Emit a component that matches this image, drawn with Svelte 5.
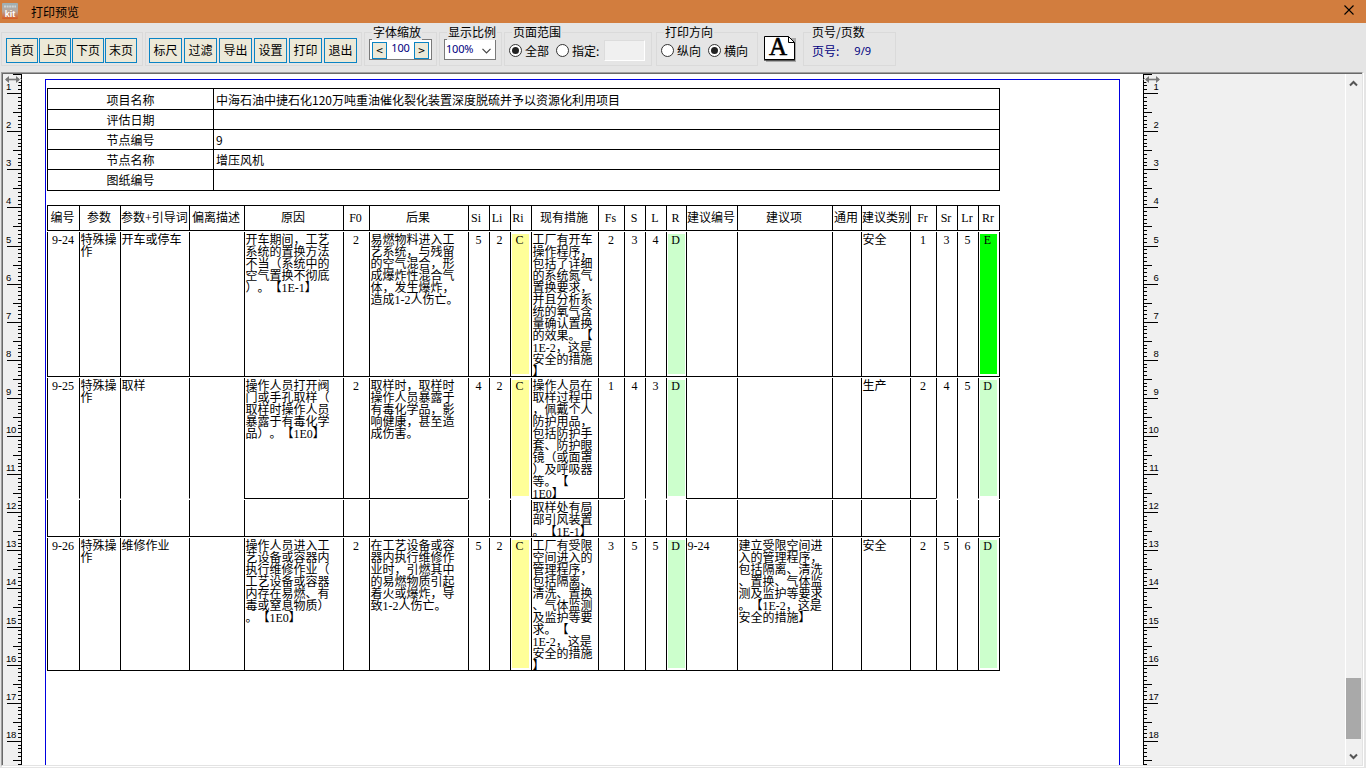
<script>
  const nav = ["首页", "上页", "下页", "末页"];
  const actions = ["标尺", "过滤", "导出", "设置", "打印", "退出"];

  const info = [
    ["项目名称", "中海石油中捷石化120万吨重油催化裂化装置深度脱硫并予以资源化利用项目"],
    ["评估日期", ""],
    ["节点编号", "9"],
    ["节点名称", "增压风机"],
    ["图纸编号", ""],
  ];

  const columns = [
    { title: "编号", center: true },
    { title: "参数" },
    { title: "参数+引导词" },
    { title: "偏离描述" },
    { title: "原因" },
    { title: "F0", center: true },
    { title: "后果" },
    { title: "Si", center: true, near: true },
    { title: "Li", center: true, near: true },
    { title: "Ri", center: true, near: true },
    { title: "现有措施" },
    { title: "Fs", center: true },
    { title: "S", center: true },
    { title: "L", center: true },
    { title: "R", center: true },
    { title: "建议编号" },
    { title: "建议项" },
    { title: "通用" },
    { title: "建议类别" },
    { title: "Fr", center: true },
    { title: "Sr", center: true },
    { title: "Lr", center: true },
    { title: "Rr", center: true },
  ];

  const risk = { C: "#ffff99", D: "#ccffcc", E: "#00ff00" };
  const riskColumns = [9, 14, 22];
  // columns that stay open when a record continues on the next line
  const merged = [0, 1, 2, 3, 7, 8, 9, 12, 13, 14, 20, 21, 22];

  const rows = [
    {
      height: 145,
      cells: [
        "9-24", "特殊操\n作", "开车或停车", "",
        "开车期间，工艺\n系统的置换方法\n不当（系统中的\n空气置换不彻底\n）。【1E-1】",
        "2",
        "易燃物料进入工\n艺系统，与残留\n的空气混合，形\n成爆炸性混合气\n体，发生爆炸，\n造成1-2人伤亡。",
        "5", "2", "C",
        "工厂有开车\n操作程序，\n包括了详细\n的系统氮气\n置换要求，\n并且分析系\n统的氧气含\n量确认置换\n的效果。【\n1E-2，这是\n安全的措施\n】",
        "2", "3", "4", "D", "", "", "", "安全", "1", "3", "5", "E",
      ],
    },
    {
      height: 121,
      open: true,
      cells: [
        "9-25", "特殊操\n作", "取样", "",
        "操作人员打开阀\n门或手孔取样（\n取样时操作人员\n暴露于有毒化学\n品）。【1E0】",
        "2",
        "取样时，取样时\n操作人员暴露于\n有毒化学品，影\n响健康，甚至造\n成伤害。",
        "4", "2", "C",
        "操作人员在\n取样过程中\n，佩戴个人\n防护用品，\n包括防护手\n套、防护眼\n镜（或面罩\n）及呼吸器\n等。【\n1E0】",
        "1", "4", "3", "D", "", "", "", "生产", "2", "4", "5", "D",
      ],
    },
    {
      height: 37,
      cells: [
        "", "", "", "", "", "", "", "", "", "",
        "取样处有局\n部引风装置\n。【1E-1】",
        "", "", "", "", "", "", "", "", "", "", "", "",
      ],
    },
    {
      height: 133,
      cells: [
        "9-26", "特殊操\n作", "维修作业", "",
        "操作人员进入工\n艺设备或容器内\n执行维修作业（\n工艺设备或容器\n内存在易燃、有\n毒或窒息物质）\n。【1E0】",
        "2",
        "在工艺设备或容\n器内执行维修作\n业时，引燃其中\n的易燃物质引起\n着火或爆炸，导\n致1-2人伤亡。",
        "5", "2", "C",
        "工厂有受限\n空间进入的\n管理程序，\n包括隔离、\n清洗、置换\n、气体监测\n及监护等要\n求。【\n1E-2，这是\n安全的措施\n】",
        "3", "5", "5", "D", "9-24",
        "建立受限空间进\n入的管理程序，\n包括隔离、清洗\n、置换、气体监\n测及监护等要求\n。【1E-2，这是\n安全的措施】",
        "", "安全", "2", "5", "6", "D",
      ],
    },
  ];

  const ticks = [];
  for (let i = 5; i <= 186; i++) {
    ticks.push({
      y: Math.round(i * 3.81 - 19) + 0.5,
      size: i % 10 === 0 ? 14 : i % 5 === 0 ? 8 : 3,
      label: i % 10 === 0 ? i / 10 : "",
    });
  }

  let range = "all";
  let direction = "landscape";
</script>

{#snippet ruler(right)}
  <svg class="ruler" width="19" height="691">
    {#each ticks as t}
      {#if right}
        <path d="M1 {t.y}h{t.size}" stroke="#000" />
        <text x="15.5" y={t.y - 3.5} text-anchor="end">{t.label}</text>
      {:else}
        <path d="M{18 - t.size} {t.y}h{t.size}" stroke="#000" />
        <text x="3" y={t.y - 3.5}>{t.label}</text>
      {/if}
    {/each}
    <path d={right ? "M.5 0v691" : "M18.5 0v691"} stroke="#000" />
    <g transform="translate(1 0)">
      <path d="M1 5.5h15M5 2l-3.5 3.5L5 9M12 2l3.5 3.5L12 9" fill="none" stroke="#f0f0f0" stroke-width="3" />
      <path d="M2 5.5h13" stroke="#777" stroke-width="1.6" />
      <path d="M5 2v7L1 5.5zM12 2v7l4-3.5z" fill="#777" />
    </g>
  </svg>
{/snippet}

{#snippet radio(on)}
  <svg class="radio" width="13" height="13">
    <circle cx="6.5" cy="6.5" r="6" fill="#fff" stroke="#333" />
    {#if on}<circle cx="6.5" cy="6.5" r="3.5" fill="#222" />{/if}
  </svg>
{/snippet}

<div class="window">
  <header>
    <svg class="logo" width="16" height="16">
      <defs>
        <linearGradient id="kit" x2="0" y2="1">
          <stop offset="0" stop-color="#9db0b5" />
          <stop offset=".5" stop-color="#b9a79c" />
          <stop offset="1" stop-color="#d65a20" />
        </linearGradient>
      </defs>
      <rect width="16" height="16" rx="1" fill="url(#kit)" />
      <path d="M2 3.5h12" stroke="#dfe6e6" stroke-width="2" stroke-dasharray="2 .6" opacity=".7" />
      <text x="8" y="14" text-anchor="middle">kit</text>
    </svg>
    <h1>打印预览</h1>
    <svg class="close" width="10" height="10">
      <path d="M.5.5l9 9M9.5.5l-9 9" stroke="#000" stroke-width="1.1" />
    </svg>
  </header>

  <div class="toolbar">
    <div class="group nav">
      {#each nav as label}<button>{label}</button>{/each}
    </div>
    <div class="group actions">
      {#each actions as label}<button>{label}</button>{/each}
    </div>
    <div class="group zoomfont">
      <span class="legend">字体缩放</span>
      <div class="spin">
        <button>&lt;</button>
        <span>100</span>
        <button>&gt;</button>
      </div>
    </div>
    <div class="group scale">
      <span class="legend">显示比例</span>
      <div class="select">
        <span>100%</span>
        <svg width="9" height="6"><path d="M.5.8l4 4 4-4" fill="none" stroke="#444" stroke-width="1.2" /></svg>
      </div>
    </div>
    <div class="group range">
      <span class="legend">页面范围</span>
      {@render radio(range === "all")}<span class="opt">全部</span>
      {@render radio(range === "some")}<span class="opt">指定:</span>
      <div class="field"></div>
    </div>
    <div class="group direction">
      <span class="legend">打印方向</span>
      {@render radio(direction === "portrait")}<span class="opt">纵向</span>
      {@render radio(direction === "landscape")}<span class="opt">横向</span>
    </div>
    <svg class="paper" width="32" height="26">
      <path d="M2 2h30v24H2z" fill="#a8a8a8" />
      <path d="M.5.5h24l6 6v17H.5z" fill="#fff" stroke="#000" />
      <path d="M24.5.5v6h6" fill="none" stroke="#000" />
      <path d="M0 24h31" stroke="#000" />
      <text x="14" y="19" text-anchor="middle">A</text>
    </svg>
    <div class="group pages">
      <span class="legend">页号/页数</span>
      <span>页号:</span><span class="num">9/9</span>
    </div>
  </div>

  <div class="viewer">
    {@render ruler(false)}
    <div class="canvas">
      <div class="page">
        <div class="info">
          {#each info as [name, value]}
            <div class="name">{name}</div>
            <div class="value">{value}</div>
          {/each}
        </div>

        <div class="row head">
          {#each columns as c}
            <div class="cell" class:near={c.near}>{c.title}</div>
          {/each}
        </div>
        {#each rows as row}
          <div class="row" style="height: {row.height}px">
            {#each row.cells as text, i}
              <div class="cell" class:center={columns[i].center} class:open={row.open && merged.includes(i)}>
                {#if riskColumns.includes(i) && text}
                  <div class="risk" style="background: {risk[text]}">{text}</div>
                {:else}{text}{/if}
              </div>
            {/each}
          </div>
        {/each}
      </div>
    </div>
    {@render ruler(true)}
    <div class="desk"></div>
    <div class="scrollbar">
      <svg width="9" height="7"><path d="M1 5.5L4.5 2 8 5.5" fill="none" stroke="#555" stroke-width="2" /></svg>
      <div class="thumb"></div>
      <svg width="9" height="7"><path d="M1 1.5L4.5 5 8 1.5" fill="none" stroke="#555" stroke-width="2" /></svg>
    </div>
  </div>
</div>

<style>
  :global(body) {
    overflow: hidden;
  }

  .window {
    width: 1366px;
    height: 768px;
    display: flex;
    flex-direction: column;
    background: #e5e5e5;
    color: #000;
    font: 12px/16px "Noto Sans CJK SC", sans-serif;
    text-spacing-trim: space-all;
  }

  header {
    height: 23px;
    display: flex;
    align-items: flex-start;
    background: #d27d3e;
  }
  .logo {
    margin: 3px 13px 0 2px;
  }
  .logo text {
    font: bold 9px "Liberation Sans", sans-serif;
    fill: #fff;
  }
  h1 {
    flex: 1;
    margin: 4px 0 0;
    font-size: 12px;
    font-weight: normal;
  }
  .close {
    margin: 5px 12px 0 0;
  }

  .toolbar {
    height: 49px;
    display: flex;
    align-items: flex-start;
    padding-left: 1px;
    box-sizing: border-box;
  }
  .group {
    position: relative;
    box-sizing: border-box;
    height: 34px;
    margin: 9px 3px 0 0;
    border: 1px solid #dadada;
    display: flex;
    align-items: flex-start;
  }
  .legend {
    position: absolute;
    top: -9px;
    left: 7px;
    padding: 0 1px;
    background: #e5e5e5;
    white-space: nowrap;
  }
  button {
    box-sizing: border-box;
    padding: 0;
    border: 1px solid #0a84c4;
    background: #ece9d8;
    font: inherit;
    color: #000;
  }
  .nav {
    width: 142px;
    padding: 5px 0 0 4px;
    gap: 1px;
    margin-right: 2px;
  }
  .nav button {
    width: 32px;
    height: 25px;
  }
  .actions {
    width: 217px;
    padding: 5px 0 0 3px;
    gap: 2px;
    margin-right: 2px;
  }
  .actions button {
    width: 33px;
    height: 25px;
  }
  .nav button,
  .actions button {
    padding-bottom: 1px;
  }
  .zoomfont {
    width: 73px;
    margin-right: 2px;
    padding: 6px 0 0 4px;
  }
  .spin {
    box-sizing: border-box;
    width: 63px;
    height: 21px;
    border: 1px solid #7a7a7a;
    background: #fff;
    display: flex;
    padding: 1px 2px 0;
    justify-content: space-between;
    color: #000080;
  }
  .spin button {
    width: 15px;
    height: 17px;
    margin-top: 1px;
    font: 11px/13px "DejaVu Sans Mono", monospace;
  }
  .spin span,
  .select span {
    font: 11px/13px "Noto Sans", sans-serif;
    letter-spacing: -0.2px;
  }
  .scale {
    width: 63px;
    margin-right: 2px;
    padding: 6px 0 0 4px;
  }
  .select {
    box-sizing: border-box;
    width: 52px;
    height: 21px;
    border: 1px solid #7a7a7a;
    background: #fff;
    display: flex;
    padding: 2px 4px 0 1px;
    justify-content: space-between;
    color: #000080;
  }
  .select svg {
    margin-top: 6px;
  }
  .range {
    width: 148px;
    margin-right: 4px;
    padding: 11px 0 0 4px;
  }
  .opt {
    margin: 0 7px 0 3px;
    line-height: 14px;
    white-space: nowrap;
  }
  .range .opt:last-of-type {
    margin-right: 5px;
  }
  .radio {
    flex: none;
  }
  .field {
    box-sizing: border-box;
    width: 41px;
    height: 21px;
    margin-top: -4px;
    border: 1px solid #fff;
    border-top-color: #dcdcdc;
    border-left-color: #dcdcdc;
    background: #f0f0f0;
  }
  .direction {
    width: 102px;
    margin-right: 6px;
    padding: 11px 0 0 4px;
  }
  .paper {
    margin: 13px 7px 0 0;
  }
  .paper text {
    font: 25px "Liberation Serif", serif;
    stroke: #000;
    stroke-width: 0.6px;
  }
  .pages {
    width: 93px;
    padding: 10px 0 0 8px;
    color: #000080;
  }
  .pages .legend {
    color: #000;
  }
  .pages .num {
    margin-left: 15px;
    font-family: "Noto Sans", sans-serif;
    font-size: 11px;
  }

  .viewer {
    box-sizing: border-box;
    height: 694px;
    width: 1362px;
    margin-left: 1px;
    border: 1px solid #a0a0a0;
    border-right-color: #e3e3e3;
    border-bottom-color: #e3e3e3;
    box-shadow:
      inset 1px 1px #696969,
      1px 1px #fff;
    padding: 1px 0 0 1px;
    display: flex;
    background: #f0f0f0;
  }
  .ruler {
    flex: none;
  }
  .ruler text {
    font: 9.5px "Liberation Sans", sans-serif;
    letter-spacing: -0.3px;
  }
  .canvas {
    box-sizing: border-box;
    width: 1121px;
    height: 691px;
    padding: 5px 0 0 23px;
    background: #fff;
    overflow: hidden;
  }
  .page {
    box-sizing: border-box;
    width: 1075px;
    height: 700px;
    border: 1px solid #0000e0;
    padding: 8px 0 0 1px;
  }

  .info {
    box-sizing: border-box;
    width: 953px;
    height: 103px;
    display: grid;
    grid-template-columns: 166px 1fr;
    grid-template-rows: 21px repeat(3, 20px) 22px;
    border-right: 1px solid #000;
    margin-bottom: 14px;
    line-height: 20px;
  }
  .info > div {
    border-top: 1px solid #000;
    border-left: 1px solid #000;
  }
  .info > div:nth-child(-n + 2) {
    line-height: 21px;
  }
  .info > div:nth-last-child(-n + 2) {
    border-bottom: 1px solid #000;
  }
  .name {
    text-align: center;
  }
  .value {
    padding-left: 2px;
  }

  .row {
    width: 952px;
    display: grid;
    grid-template-columns: 32px 41px 69px 55px 99px 26px 99px 21px 21px 21px 67px 26px 21px 21px 20px 51px 95px 29px 49px 26px 21px 21px 21px;
    border-right: 1px solid #000;
    margin-top: 1px;
    font-family: "Liberation Serif", "Noto Sans CJK SC", serif;
    line-height: 12px;
  }
  .cell {
    box-sizing: border-box;
    min-width: 0;
    padding: 2px 0 0 0.5px;
    border-left: 1px solid #000;
    border-bottom: 1px solid #000;
    overflow: hidden;
    white-space: pre;
  }
  .cell.center {
    padding: 2px 2px 0 1px;
    text-align: center;
  }
  .cell.open {
    border-bottom-color: transparent;
  }
  .head {
    height: 26px;
  }
  .head .cell {
    padding: 0 2px 0 0;
    border-top: 1px solid #000;
    text-align: center;
    line-height: 24px;
  }
  .head .near {
    padding-right: 6px;
  }
  .risk {
    box-sizing: border-box;
    width: 17px;
    height: calc(100% - 2px);
    padding-right: 2px;
  }

  .desk {
    flex: 1;
  }
  .scrollbar {
    box-sizing: border-box;
    width: 17px;
    border-left: 1px solid #fff;
    display: flex;
    flex-direction: column;
    align-items: center;
    padding: 6px 1px 5px 0;
  }
  .thumb {
    width: 15px;
    height: 61px;
    margin: auto 0 14px;
    background: #a9a9a9;
  }
</style>
